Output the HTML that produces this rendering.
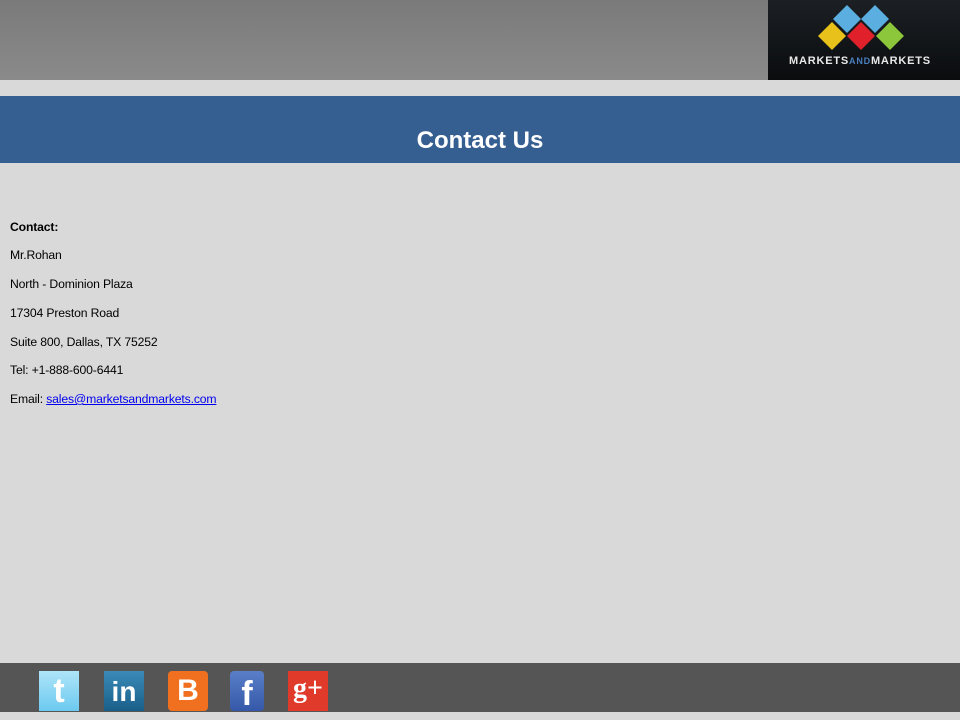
<!DOCTYPE html>
<html><head><meta charset="utf-8"><style>
body{margin:0;width:960px;height:720px;background:#d9d9d9;position:relative;overflow:hidden;font-family:"Liberation Sans",sans-serif}
.a{position:absolute}
.t{position:absolute;left:10px;font-size:12.2px;color:#000;letter-spacing:-0.15px}
.ic{position:absolute;top:671px;width:40px;height:40px;color:#fff;font-weight:bold;text-align:center;font-family:"Liberation Sans",sans-serif}
</style></head><body>
<div class="a" style="left:0;top:0;width:960px;height:80px;background:linear-gradient(#7a7a7a,#8a8a8a)"></div>
<div class="a" style="left:768px;top:0;width:192px;height:80px;background:linear-gradient(#1c2024,#0a0c0e)"></div>
<svg class="a" style="left:768px;top:0" width="192" height="80">
<polygon points="79,5 93,19 79,33 65,19" fill="#5aaee0"/>
<polygon points="107,5 121,19 107,33 93,19" fill="#5aaee0"/>
<polygon points="64,22 78,36 64,50 50,36" fill="#e8c21a"/>
<polygon points="93,22 107,36 93,50 79,36" fill="#e0202a"/>
<polygon points="122,22 136,36 122,50 108,36" fill="#8cc63a"/>
<text x="92" y="64" text-anchor="middle" font-family="Liberation Sans" font-weight="bold" font-size="11" fill="#e8e8e8" letter-spacing="0.8">MARKETS<tspan fill="#4a7fc0" font-size="9">AND</tspan>MARKETS</text>
</svg>
<div class="a" style="left:0;top:96px;width:960px;height:67px;background:#365f91"></div>
<div class="a" style="left:0;top:127px;width:960px;text-align:center;color:#fff;font-size:24px;font-weight:bold">Contact Us</div>
<div class="t" style="top:220px;font-weight:bold">Contact:</div>
<div class="t" style="top:248px">Mr.Rohan</div>
<div class="t" style="top:277px">North - Dominion Plaza</div>
<div class="t" style="top:306px">17304 Preston Road</div>
<div class="t" style="top:335px">Suite 800, Dallas, TX 75252</div>
<div class="t" style="top:363px">Tel: +1-888-600-6441</div>
<div class="t" style="top:392px">Email: <span style="color:#0000ee;text-decoration:underline">sales@marketsandmarkets.com</span></div>
<div class="a" style="left:0;top:663px;width:960px;height:49px;background:#555"></div>
<div class="ic" style="left:39px;background:linear-gradient(#aee4f8,#6ccaf0);font-size:34px;line-height:40px">t</div>
<div class="ic" style="left:104px;background:linear-gradient(#3a8ab8,#1a5f8a);font-size:28px;line-height:42px">in</div>
<div class="ic" style="left:168px;background:#f07020;font-size:30px;line-height:40px;border-radius:4px">B</div>
<div class="ic" style="left:230px;width:34px;background:linear-gradient(#5a7fc8,#3558a8);font-size:34px;line-height:46px;border-radius:4px">f</div>
<div class="ic" style="left:288px;background:#e03a2a;font-size:28px;line-height:36px;font-family:'Liberation Serif',serif">g+</div>
</body></html>
